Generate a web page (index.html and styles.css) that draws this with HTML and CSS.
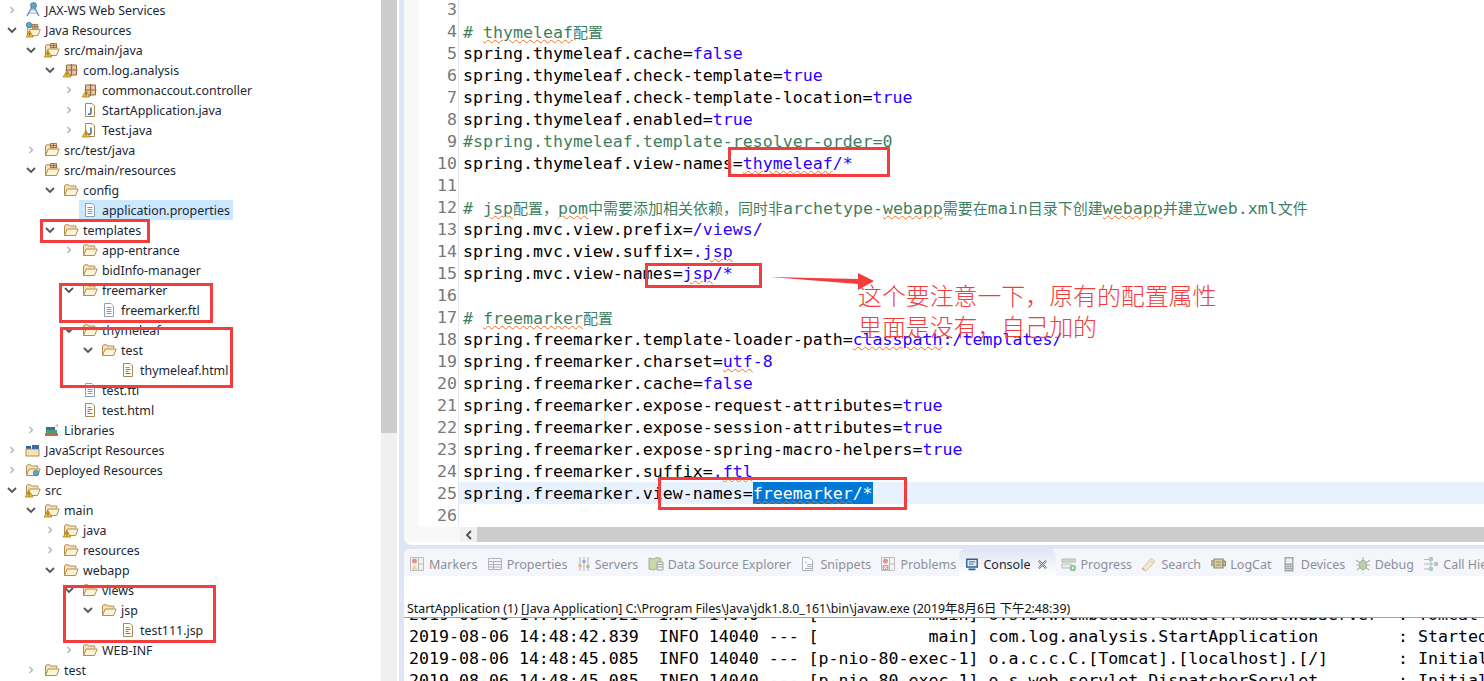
FILE: index.html
```html
<!DOCTYPE html>
<html lang="zh-CN">
<head>
<meta charset="utf-8">
<title>Eclipse</title>
<link rel="stylesheet" href="styles.css">
</head>
<body>
<svg class="defs" xmlns="http://www.w3.org/2000/svg">
  <symbol id="warn" viewBox="0 0 16 16"><path d="M4 8.5 7.8 15H.2z" fill="#f6c83e" stroke="#a87b1e" stroke-width=".8"/><path d="M4 10.6v2.2M4 13.5v.8" stroke="#5a3d08" stroke-width="1"/></symbol>
  <symbol id="folder" viewBox="0 0 16 16"><path d="M1.5 13.5V4l1-1.2h3.2l1 1.2h6.1v2.5" fill="#f6e2b4" stroke="#b48c52"/><path d="M1.5 13.5 4.2 7h11l-2.6 6.5z" fill="#fdf3d6" stroke="#b48c52"/></symbol>
  <symbol id="folderw" viewBox="0 0 16 16"><use href="#folder"/><use href="#warn"/></symbol>
  <symbol id="src" viewBox="0 0 16 16"><use href="#folder"/><path d="M6.5 1.5h6v4h-6zM9.5 1.5v4M6.5 3.5h6" fill="#e8c9a0" stroke="#8a5a30" stroke-width=".8"/></symbol>
  <symbol id="srcw" viewBox="0 0 16 16"><use href="#src"/><use href="#warn"/></symbol>
  <symbol id="pkg" viewBox="0 0 16 16"><path d="M3.5 3h10v10h-10z" fill="#e6c6a2" stroke="#96694a"/><path d="M8.5 2v12M2.5 8h12" stroke="#96694a" stroke-width="1.2"/></symbol>
  <symbol id="pkgw" viewBox="0 0 16 16"><use href="#pkg"/><use href="#warn"/></symbol>
  <symbol id="page" viewBox="0 0 16 16"><path d="M3.5 1.5h6.5l2.5 2.5v10.500h-9z" fill="#fff" stroke="#8d9fb8"/></symbol>
  <symbol id="props" viewBox="0 0 16 16"><use href="#page"/><path d="M5.500 5.500h5M5.500 7.500h5M5.500 9.500h5M5.500 11.500h5" stroke="#8096b8"/></symbol>
  <symbol id="html" viewBox="0 0 16 16"><path d="M3.500 1.500h6.500l2.500 2.500v10.500h-9z" fill="#fffdf5" stroke="#a08a55"/><path d="M5.500 5.500h4" stroke="#8096b8"/><path d="M5.500 7.500h5" stroke="#d85050"/><path d="M5.500 9.500h3" stroke="#50a050"/><path d="M5.500 11.500h5" stroke="#5070d0"/></symbol>
  <symbol id="java" viewBox="0 0 16 16"><path d="M3.500 1.500h6.500l2.500 2.500v10.500h-9z" fill="#fffdf5" stroke="#a08a55"/><path d="M9 5.500v5.500q0 1.500-3 1.200" fill="none" stroke="#3a6fb0" stroke-width="1.500"/></symbol>
  <symbol id="javaw" viewBox="0 0 16 16"><use href="#java"/><use href="#warn"/></symbol>
  <symbol id="lib" viewBox="0 0 16 16"><path d="M1 11h13v3H1z" fill="#c0703c"/><path d="M2 8h11v3H2z" fill="#4a9a80"/><path d="M2 5h9v3H2z" fill="#3a6aa8"/><path d="M11 3.500 14 2v3z" fill="#e8c040"/></symbol>
  <symbol id="globe" viewBox="0 0 16 16"><circle cx="8" cy="8" r="4.500" fill="#5f9fd8" stroke="#2e5f98" stroke-width=".8"/><path d="M5 7.500 8 5l1.500 2-2 3z" fill="#6cb66c"/></symbol>
  <symbol id="ws" viewBox="0 0 16 16"><path d="M2 14 8 3l6 11" fill="none" stroke="#6888b8" stroke-width="1.400"/><path d="M4 11h8M5.500 8h5" stroke="#8aa0c8"/><use href="#globe" x="3" y="-2" width="11" height="11"/></symbol>
  <symbol id="jres" viewBox="0 0 16 16"><use href="#srcw" x="1" y="1" width="15" height="15"/><use href="#globe" x="-1" y="-2" width="10" height="10"/></symbol>
  <symbol id="jsres" viewBox="0 0 16 16"><path d="M1 4h5v3H1z" fill="#2a5fa8"/><path d="M1 7h13v7H1z" fill="#f6e2b4" stroke="#b48c52"/><path d="M7 3h7v4H7z" fill="#3a6aa8"/></symbol>
  <symbol id="dep" viewBox="0 0 16 16"><use href="#folder"/><use href="#globe" x="6" y="6" width="10" height="10"/></symbol>
  <symbol id="t-markers" viewBox="0 0 16 16"><path d="M1.500 1.500h13v13h-13zM9.500 1.500v13M9.500 8h5" fill="#f2f2f2" stroke="#9a9a9a"/><circle cx="5.500" cy="5" r="2.500" fill="#e05050"/><path d="M5.500 8.500 8.500 13.500h-6z" fill="#f0c040"/></symbol>
  <symbol id="t-props" viewBox="0 0 16 16"><path d="M1.500 2.500h13v11h-13zM1.500 5.500h13M1.500 8.500h13M1.500 11h13M6.500 5.500v8" fill="#f4f4f4" stroke="#8a8a9a"/></symbol>
  <symbol id="t-servers" viewBox="0 0 14 16"><path d="M3 1v14M7 1v14M11 1v14" stroke="#8a8a8a"/><path d="M1.500 8h3v3h-3z" fill="#d89030"/><path d="M5.500 4h3v3h-3z" fill="#5080c0"/><path d="M9.500 9h3v3h-3z" fill="#60a060"/></symbol>
  <symbol id="t-ds" viewBox="0 0 16 16"><path d="M1 2l4 1 4-1.500 4 1v11l-4-1-4 1.500-4-1z" fill="#a8c878" stroke="#6f9050"/><path d="M9 6h6v8H9zM9 8.500h6M9 11h6" fill="#f0f0f0" stroke="#707070"/></symbol>
  <symbol id="t-snip" viewBox="0 0 16 16"><path d="M2.500 1.500h7l3 3v10h-10z" fill="#fff" stroke="#8a8a9a"/><path d="M5 6h2M7 8.500h5M7 10.500h5M5 12.500h7" stroke="#7a8aa0"/></symbol>
  <symbol id="t-prob" viewBox="0 0 16 16"><path d="M1.500 1.500h13v13h-13zM9.500 1.500v13M9.500 8h5" fill="#f2f2f2" stroke="#9a9a9a"/><circle cx="5.500" cy="5" r="2.500" fill="#e05050"/><path d="M2.500 9h6v5h-6z" fill="#e06060"/><path d="M4 10l3 3M7 10l-3 3" stroke="#fff"/></symbol>
  <symbol id="t-console" viewBox="0 0 16 16"><path d="M2 2.500h12v9H2z" fill="#dfe8f5" stroke="#2f5f90" stroke-width="1.600"/><path d="M4.500 5.500h7M4.500 8h5" stroke="#2f5f90"/><path d="M4 14h8" stroke="#2f5f90" stroke-width="2"/></symbol>
  <symbol id="t-progress" viewBox="0 0 16 16"><path d="M2 3h14v3H2z" fill="#b0c8a8" stroke="#8a9a8a"/><path d="M2 8h9v4H2z" fill="#e8e8e8" stroke="#9a9a9a"/><circle cx="13" cy="12" r="3.300" fill="#58a858"/><path d="M12 10.500l2.500 1.500-2.500 1.500z" fill="#fff"/></symbol>
  <symbol id="t-search" viewBox="0 0 16 16"><path d="M1 13 10 2.500l4 3L5 15z" fill="#f6e2b4" stroke="#c0a870"/><path d="M1 13l2 1.500 1-1-2-2z" fill="#999"/><path d="M9 5l3 2" stroke="#d8b860"/></symbol>
  <symbol id="t-logcat" viewBox="0 0 16 16"><path d="M4 3h9v9H4z" fill="#c8b858" stroke="#504820" stroke-width="1.200"/><path d="M13 5h2.500v5H13z" fill="#a89840" stroke="#504820"/><path d="M1 4h3v2H1z" fill="#e05050"/><path d="M1 6h3v2H1z" fill="#50a050"/><path d="M1 8h3v2H1z" fill="#5070d0"/><path d="M6 6h5M6 9h5" stroke="#504820"/></symbol>
  <symbol id="t-dev" viewBox="0 0 16 16"><path d="M3.500 1h9v14.500h-9z" fill="#777"/><path d="M5 2.500h6v5H5z" fill="#e8e8e8"/><path d="M5 9.500h6M5 11.500h6M5 13.500h6" stroke="#ddd" stroke-dasharray="1.500 1"/></symbol>
  <symbol id="t-debug" viewBox="0 0 16 16"><ellipse cx="8" cy="9" rx="3.500" ry="4.500" fill="#9ab87a" stroke="#6a8a50"/><path d="M1 4l4 3M15 4l-4 3M1 9h3.500M15 9h-3.500M2 14l3-2.500M14 14l-3-2.500M8 1v3" stroke="#7a8a70" stroke-width="1.100"/></symbol>
  <symbol id="t-call" viewBox="0 0 16 16"><path d="M1 3.500h5M1 8h9M1 13h5M6 3.500 9 8 6 13" fill="none" stroke="#909090"/><circle cx="8" cy="3" r="2.300" fill="#80b090"/><circle cx="13" cy="8" r="2.300" fill="#80b090"/><circle cx="8" cy="13" r="2.300" fill="#80b090"/></symbol>
  <symbol id="chev-r" viewBox="0 0 8 10"><path d="M2 1l4 4-4 4" fill="none" stroke="#b4b4b4" stroke-width="1.800"/></symbol>
  <symbol id="chev-d" viewBox="0 0 10 8"><path d="M1 2l4 4 4-4" fill="none" stroke="#555" stroke-width="1.800"/></symbol>
</svg>

<div class="app">
  <nav class="tree">
    <div class="row l0"><svg class="cr"><use href="#chev-r"/></svg><svg class="ic"><use href="#ws"/></svg><span>JAX-WS Web Services</span></div>
    <div class="row l0"><svg class="cd"><use href="#chev-d"/></svg><svg class="ic"><use href="#jres"/></svg><span>Java Resources</span></div>
    <div class="row l1"><svg class="cd"><use href="#chev-d"/></svg><svg class="ic"><use href="#srcw"/></svg><span>src/main/java</span></div>
    <div class="row l2"><svg class="cd"><use href="#chev-d"/></svg><svg class="ic"><use href="#pkgw"/></svg><span>com.log.analysis</span></div>
    <div class="row l3"><svg class="cr"><use href="#chev-r"/></svg><svg class="ic"><use href="#pkgw"/></svg><span>commonaccout.controller</span></div>
    <div class="row l3"><svg class="cr"><use href="#chev-r"/></svg><svg class="ic"><use href="#java"/></svg><span>StartApplication.java</span></div>
    <div class="row l3"><svg class="cr"><use href="#chev-r"/></svg><svg class="ic"><use href="#javaw"/></svg><span>Test.java</span></div>
    <div class="row l1"><svg class="cr"><use href="#chev-r"/></svg><svg class="ic"><use href="#src"/></svg><span>src/test/java</span></div>
    <div class="row l1"><svg class="cd"><use href="#chev-d"/></svg><svg class="ic"><use href="#src"/></svg><span>src/main/resources</span></div>
    <div class="row l2"><svg class="cd"><use href="#chev-d"/></svg><svg class="ic"><use href="#folder"/></svg><span>config</span></div>
    <div class="row l3"><i class="nc"></i><div class="sel"><svg class="ic"><use href="#props"/></svg><span>application.properties</span></div></div>
    <div class="row l2"><svg class="cd"><use href="#chev-d"/></svg><svg class="ic"><use href="#folder"/></svg><span>templates</span></div>
    <div class="row l3"><svg class="cr"><use href="#chev-r"/></svg><svg class="ic"><use href="#folder"/></svg><span>app-entrance</span></div>
    <div class="row l3"><i class="nc"></i><svg class="ic"><use href="#folder"/></svg><span>bidInfo-manager</span></div>
    <div class="row l3"><svg class="cd"><use href="#chev-d"/></svg><svg class="ic"><use href="#folder"/></svg><span>freemarker</span></div>
    <div class="row l4"><i class="nc"></i><svg class="ic"><use href="#props"/></svg><span>freemarker.ftl</span></div>
    <div class="row l3"><svg class="cd"><use href="#chev-d"/></svg><svg class="ic"><use href="#folder"/></svg><span>thymeleaf</span></div>
    <div class="row l4"><svg class="cd"><use href="#chev-d"/></svg><svg class="ic"><use href="#folder"/></svg><span>test</span></div>
    <div class="row l5"><i class="nc"></i><svg class="ic"><use href="#html"/></svg><span>thymeleaf.html</span></div>
    <div class="row l3"><i class="nc"></i><svg class="ic"><use href="#props"/></svg><span>test.ftl</span></div>
    <div class="row l3"><i class="nc"></i><svg class="ic"><use href="#html"/></svg><span>test.html</span></div>
    <div class="row l1"><svg class="cr"><use href="#chev-r"/></svg><svg class="ic"><use href="#lib"/></svg><span>Libraries</span></div>
    <div class="row l0"><svg class="cr"><use href="#chev-r"/></svg><svg class="ic"><use href="#jsres"/></svg><span>JavaScript Resources</span></div>
    <div class="row l0"><svg class="cr"><use href="#chev-r"/></svg><svg class="ic"><use href="#dep"/></svg><span>Deployed Resources</span></div>
    <div class="row l0"><svg class="cd"><use href="#chev-d"/></svg><svg class="ic"><use href="#folderw"/></svg><span>src</span></div>
    <div class="row l1"><svg class="cd"><use href="#chev-d"/></svg><svg class="ic"><use href="#folderw"/></svg><span>main</span></div>
    <div class="row l2"><svg class="cr"><use href="#chev-r"/></svg><svg class="ic"><use href="#folderw"/></svg><span>java</span></div>
    <div class="row l2"><svg class="cr"><use href="#chev-r"/></svg><svg class="ic"><use href="#folder"/></svg><span>resources</span></div>
    <div class="row l2"><svg class="cd"><use href="#chev-d"/></svg><svg class="ic"><use href="#folder"/></svg><span>webapp</span></div>
    <div class="row l3"><svg class="cd"><use href="#chev-d"/></svg><svg class="ic"><use href="#folder"/></svg><span>views</span></div>
    <div class="row l4"><svg class="cd"><use href="#chev-d"/></svg><svg class="ic"><use href="#folder"/></svg><span>jsp</span></div>
    <div class="row l5"><i class="nc"></i><svg class="ic"><use href="#html"/></svg><span>test111.jsp</span></div>
    <div class="row l3"><svg class="cr"><use href="#chev-r"/></svg><svg class="ic"><use href="#folder"/></svg><span>WEB-INF</span></div>
    <div class="row l1"><svg class="cr"><use href="#chev-r"/></svg><svg class="ic"><use href="#folder"/></svg><span>test</span></div>
  </nav>
  <div class="vscroll"><div class="vthumb"></div></div>

  <main class="right">
    <section class="editor">
      <div class="lines">
        <div class="ln"><b>3</b><code></code></div>
        <div class="ln"><b>4</b><code class="c"># <u>thymeleaf</u><em>配置</em></code></div>
        <div class="ln"><b>5</b><code>spring.thymeleaf.cache=<s>false</s></code></div>
        <div class="ln"><b>6</b><code>spring.thymeleaf.check-template=<s>true</s></code></div>
        <div class="ln"><b>7</b><code>spring.thymeleaf.check-template-location=<s>true</s></code></div>
        <div class="ln"><b>8</b><code>spring.thymeleaf.enabled=<s>true</s></code></div>
        <div class="ln"><b>9</b><code class="c">#spring.thymeleaf.template-resolver-order=0</code></div>
        <div class="ln"><b>10</b><code>spring.thymeleaf.view-names=<s><u>thymeleaf</u>/*</s></code></div>
        <div class="ln"><b>11</b><code></code></div>
        <div class="ln"><b>12</b><code class="c"># <u>jsp</u><em>配置，</em><u>pom</u><em>中需要添加相关依赖，同时非</em>archetype-<u>webapp</u><em>需要在</em>main<em>目录下创建</em><u>webapp</u><em>并建立</em>web.xml<em>文件</em></code></div>
        <div class="ln"><b>13</b><code>spring.mvc.view.prefix=<s>/views/</s></code></div>
        <div class="ln"><b>14</b><code>spring.mvc.view.suffix=<s>.<u>jsp</u></s></code></div>
        <div class="ln"><b>15</b><code>spring.mvc.view-names=<s><u>jsp</u>/*</s></code></div>
        <div class="ln"><b>16</b><code></code></div>
        <div class="ln"><b>17</b><code class="c"># <u>freemarker</u><em>配置</em></code></div>
        <div class="ln"><b>18</b><code>spring.freemarker.template-loader-path=<s><u>classpath</u>:/templates/</s></code></div>
        <div class="ln"><b>19</b><code>spring.freemarker.charset=<s><u>utf</u>-8</s></code></div>
        <div class="ln"><b>20</b><code>spring.freemarker.cache=<s>false</s></code></div>
        <div class="ln"><b>21</b><code>spring.freemarker.expose-request-attributes=<s>true</s></code></div>
        <div class="ln"><b>22</b><code>spring.freemarker.expose-session-attributes=<s>true</s></code></div>
        <div class="ln"><b>23</b><code>spring.freemarker.expose-spring-macro-helpers=<s>true</s></code></div>
        <div class="ln"><b>24</b><code>spring.freemarker.suffix=<s>.<u>ftl</u></s></code></div>
        <div class="ln cur"><b>25</b><code>spring.freemarker.view-names=<mark><u>freemarker</u>/*</mark></code></div>
        <div class="ln"><b>26</b><code></code></div>
      </div>
      <div class="hbar"><div class="hcorner"></div><div class="harrow"><svg class="la" viewBox="0 0 8 10"><path d="M6 1 2 5l4 4" fill="none" stroke="#505050" stroke-width="1.800"/></svg></div><div class="hthumb"></div></div>
    </section>

    <section class="views">
      <div class="tabs">
        <div class="tab"><svg class="ti"><use href="#t-markers"/></svg><span>Markers</span></div>
        <div class="tab"><svg class="ti"><use href="#t-props"/></svg><span>Properties</span></div>
        <div class="tab"><svg class="ti narrow"><use href="#t-servers"/></svg><span>Servers</span></div>
        <div class="tab"><svg class="ti"><use href="#t-ds"/></svg><span>Data Source Explorer</span></div>
        <div class="tab"><svg class="ti"><use href="#t-snip"/></svg><span>Snippets</span></div>
        <div class="tab"><svg class="ti"><use href="#t-prob"/></svg><span>Problems</span></div>
        <div class="tab on"><svg class="ti"><use href="#t-console"/></svg><span>Console</span><svg class="x" viewBox="0 0 12 12"><path d="M2 2l8 8M10 2l-8 8" stroke="#777" stroke-width="2.400"/><path d="M2 2l8 8M10 2l-8 8" stroke="#fff" stroke-width=".8"/></svg></div>
        <div class="tab"><svg class="ti"><use href="#t-progress"/></svg><span>Progress</span></div>
        <div class="tab"><svg class="ti"><use href="#t-search"/></svg><span>Search</span></div>
        <div class="tab"><svg class="ti"><use href="#t-logcat"/></svg><span>LogCat</span></div>
        <div class="tab"><svg class="ti"><use href="#t-dev"/></svg><span>Devices</span></div>
        <div class="tab"><svg class="ti"><use href="#t-debug"/></svg><span>Debug</span></div>
        <div class="tab"><svg class="ti"><use href="#t-call"/></svg><span>Call Hierarchy</span></div>
      </div>
      <div class="status">StartApplication (1) [Java Application] C:\Program Files\Java\jdk1.8.0_161\bin\javaw.exe (2019年8月6日 下午2:48:39)</div>
      <div class="console">
<pre class="log">2019-08-06 14:48:41.921  INFO 14040 --- [           main] o.s.b.w.embedded.tomcat.TomcatWebServer  : Tomcat started
2019-08-06 14:48:42.839  INFO 14040 --- [           main] com.log.analysis.StartApplication        : Started StartApplication
2019-08-06 14:48:45.085  INFO 14040 --- [p-nio-80-exec-1] o.a.c.c.C.[Tomcat].[localhost].[/]       : Initializing Spring
2019-08-06 14:48:45.085  INFO 14040 --- [p-nio-80-exec-1] o.s.web.servlet.DispatcherServlet        : Initializing Servlet</pre>
      </div>
    </section>
  </main>
</div>

<div class="box b1"></div>
<div class="box b2"></div>
<div class="box b3"></div>
<div class="box b4"></div>
<div class="box b5"></div>
<div class="box b6"></div>
<div class="box b7"></div>
<svg class="arrow" viewBox="0 0 110 24"><path d="M0 5 88 7V1l16 8-16 9v-6z" fill="#f33c3c"/></svg>
<p class="note">这个要注意一下，原有的配置属性<br>里面是没有，自己加的</p>
</body>
</html>
```
FILE: styles.css
```css
* { box-sizing: border-box; }
html, body { margin: 0; height: 681px; overflow: hidden; background: #fff; }
body { position: relative; font-family: "Noto Sans", "Noto Sans CJK SC", sans-serif; }
.defs { display: none; }
.app { display: flex; height: 681px; }

/* project tree */
.tree { width: 381px; flex: none; overflow: hidden; font-size: 12.4px; color: #1b2733; }
.row { display: flex; align-items: center; height: 20px; white-space: nowrap; }
.l0 { padding-left: 0; }
.l1 { padding-left: 19px; }
.l2 { padding-left: 38px; }
.l3 { padding-left: 57px; }
.l4 { padding-left: 76px; }
.l5 { padding-left: 95px; }
.cr, .cd, .nc { flex: none; display: block; }
.cr { width: 6px; height: 10px; margin: 0 10px 0 9px; }
.cd { width: 10px; height: 8px; margin: 0 8px 0 7px; }
.nc { width: 25px; }
.ic { width: 16px; height: 16px; flex: none; margin-right: 4px; }
.sel { display: flex; align-items: center; height: 20px; background: #cce8ff; margin-left: -3px; padding: 0 3px; }

.vscroll { width: 16px; flex: none; background: #f0f0f0; }
.vthumb { height: 433px; background: #cdcdcd; }

/* right side */
.right { flex: 1; min-width: 0; margin-left: 2px; padding-left: 5px; background: #dfe5f5; display: flex; flex-direction: column; gap: 4px; }
.editor { height: 545px; flex: none; background: #fff; border-radius: 0 0 0 8px; display: flex; flex-direction: column; overflow: hidden; }
.lines { height: 527px; flex: none; overflow: hidden; border-left: 15px solid #f8f8f8; background: #fff; padding-top: 0; margin-top: -2px; height: 529px; }
.ln { display: flex; height: 22px; font: 16.6px/24px "DejaVu Sans Mono", "Noto Sans CJK SC", monospace; white-space: nowrap; }
.ln b { width: 40px; flex: none; padding-right: 1px; text-align: right; font-weight: 400; color: #787878; border-right: 1px solid #e8e8e8; }
.ln code { flex: 1; padding-left: 4px; font: inherit; color: #000; }
.ln.cur code { background: #e8f2fe; }
.ln mark { display: inline-block; height: 22px; background: #0078d7; color: #fff; }
.c { color: #3f7f5f !important; }
.ln s { text-decoration: none; color: #2a00ff; }
.ln em { font-style: normal; font-family: "Noto Sans CJK SC", sans-serif; font-size: 15px; }
.ln u { text-decoration: underline wavy #f2701d 1px; text-underline-offset: 1px; }
.hbar { display: flex; height: 15px; flex: none; background: #f8f8f8; }
.hcorner { width: 56px; flex: none; }
.harrow { width: 17px; flex: none; background: #f0f0f0; display: flex; align-items: center; justify-content: center; }
.la { width: 8px; height: 10px; }
.hthumb { flex: 1; background: #cdcdcd; }

/* bottom views */
.views { flex: 1; min-height: 0; background: #fff; border-radius: 6px 0 0 0; display: flex; flex-direction: column; overflow: hidden; }
.tabs { height: 27px; flex: none; background: #f5f6fb; display: flex; align-items: stretch; padding-left: 5px; font-size: 12.5px; color: #8b909a; white-space: nowrap; }
.tab { display: flex; align-items: center; gap: 4px; padding: 3px 9.3px 0 0; flex: none; }
.ti { width: 16px; height: 16px; flex: none; opacity: .62; }
.ti.narrow { width: 14px; }
.tab.on { background: linear-gradient(#dfe5f5, #fff); border-radius: 7px 7px 0 0; padding: 3px 8px 0 6px; margin: 0 4px 0 -6px; color: #1b2733; }
.tab.on .ti { opacity: 1; width: 14px; }
.tab.on .x { width: 11px; height: 11px; margin-left: 3px; }
.status { height: 42px; flex: none; padding: 24px 0 0 3px; font-size: 12.4px; line-height: 17px; color: #111; white-space: nowrap; border-bottom: 1px solid #a0a0a0; }
.console { flex: 1; min-height: 0; overflow: hidden; }
.log { margin: -14px 0 0 5px; font: 16.6px/22px "DejaVu Sans Mono", monospace; color: #000; }

/* annotations on top of the screenshot */
.box { position: absolute; border: 3px solid #f33c3c; }
.b1 { left: 40px; top: 219px; width: 110px; height: 24px; }
.b2 { left: 59px; top: 283px; width: 154px; height: 40px; }
.b3 { left: 60px; top: 327px; width: 173px; height: 61px; }
.b4 { left: 63px; top: 585px; width: 153px; height: 58px; }
.b5 { left: 728px; top: 147px; width: 162px; height: 30px; }
.b6 { left: 645px; top: 263px; width: 117px; height: 25px; }
.b7 { left: 658px; top: 477px; width: 249px; height: 33px; }
.arrow { position: absolute; left: 770px; top: 272px; width: 110px; height: 24px; }
.note { position: absolute; left: 858px; top: 279px; margin: 0; font: 300 23.9px/31px "Noto Sans CJK SC", sans-serif; color: #f33c3c; white-space: nowrap; }
```
